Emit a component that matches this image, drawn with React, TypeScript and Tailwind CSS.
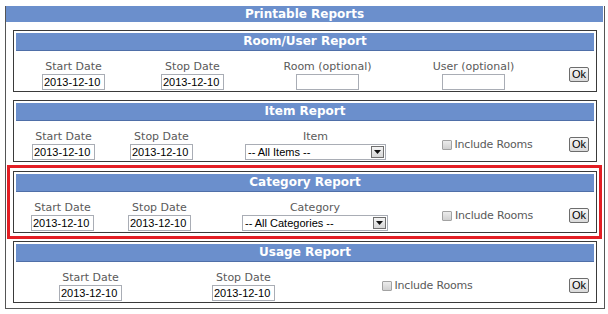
import React from 'react';

type Col = { w: number; label?: string; kind: 'date' | 'text' | 'select' | 'check' | 'ok'; value?: string; selW?: number };

const DateBox = ({ value }: { value: string }) => (
    <input
        readOnly
        defaultValue={value}
        className="w-[63px] h-[16px] px-[1px] border border-[#a9adb5] bg-white text-[11px] leading-[14px] text-black font-['Liberation_Sans',Arial,sans-serif] outline-none"
    />
);

const SelectBox = ({ value, w }: { value: string; w: number }) => (
    <div
        className="h-[16px] flex items-center justify-between border border-[#a9adb5] bg-white pl-[2px] pr-[1px]"
        style={{ width: w }}
    >
        <span className="text-[11px] leading-[14px] text-black font-['Liberation_Sans',Arial,sans-serif]">{value}</span>
        <span className="w-[13px] h-[12px] flex items-center justify-center border border-[#6f6f6f] bg-gradient-to-b from-[#f4f4f4] to-[#d6d6d6]">
            <svg width="7" height="4" viewBox="0 0 7 4"><path d="M0 0h7L3.5 4z" fill="#111" /></svg>
        </span>
    </div>
);

const Check = () => (
    <div className="flex items-center gap-[3px] text-[11px] tracking-[-0.2px] text-[#5a5a5a]">
        <span className="w-[10px] h-[10px] border border-[#a2a2a2] bg-gradient-to-b from-[#ececec] to-[#d0d0d0] rounded-[1px]" />
        <span>Include Rooms</span>
    </div>
);

const OkButton = () => (
    <button className="w-[20px] h-[15px] flex items-center justify-center border border-[#6d6d6d] rounded-[2px] bg-gradient-to-b from-[#f6f6f6] to-[#dadada] text-[11px] leading-none text-black font-['Liberation_Sans',Arial,sans-serif]">
        Ok
    </button>
);

function ReportBox({ title, cols }: { title: string; cols: Col[] }) {
    return (
        <div className="w-[584px] border border-[#3a3a3a] p-[2px] pb-0">
            <div className="h-[18px] bg-[#6b8fcc] border-b border-[#4f6fa8] text-white font-bold text-[12px] leading-[17px] text-center">
                {title}
            </div>
            <div className="flex items-center h-[40px] pt-[8px]">
                {cols.map((c, i) => (
                    <div
                        key={i}
                        className={`flex flex-col items-center ${c.kind === 'ok' ? 'flex-1 items-end pr-[5px] self-center -mt-[2px]' : ''}`}
                        style={c.kind === 'ok' ? undefined : { width: c.w }}
                    >
                        {c.label !== undefined && (
                            <span className="text-[11px] leading-[14px] text-[#5a5a5a] whitespace-nowrap">{c.label}</span>
                        )}
                        {c.kind === 'date' && <DateBox value={c.value || ''} />}
                        {c.kind === 'text' && <DateBox value="" />}
                        {c.kind === 'select' && <SelectBox value={c.value || ''} w={c.selW || 141} />}
                        {c.kind === 'check' && <Check />}
                        {c.kind === 'ok' && <OkButton />}
                    </div>
                ))}
            </div>
        </div>
    );
}

const d = '2013-12-10';

export default function App() {
    return (
        <div className="w-[608px] h-[314px] bg-white pt-[6px] font-['DejaVu_Sans',Verdana,sans-serif]">
            <div className="ml-[5px] w-[600px] h-[303px] border-x border-b border-[#555]">
                <div className="h-[16px] mr-[1px] bg-[#6b8fcc] text-white font-bold text-[12px] leading-[16px] text-center">
                    Printable Reports
                </div>
                <div className="px-[7px] pt-[8px] flex flex-col">
                    <ReportBox
                        title="Room/User Report"
                        cols={[
                            { w: 115, label: 'Start Date', kind: 'date', value: d },
                            { w: 123, label: 'Stop Date', kind: 'date', value: d },
                            { w: 147, label: 'Room (optional)', kind: 'text' },
                            { w: 145, label: 'User (optional)', kind: 'text' },
                            { w: 0, kind: 'ok' },
                        ]}
                    />
                    <div className="mt-[8px]">
                        <ReportBox
                            title="Item Report"
                            cols={[
                                { w: 95, label: 'Start Date', kind: 'date', value: d },
                                { w: 101, label: 'Stop Date', kind: 'date', value: d },
                                { w: 207, label: 'Item', kind: 'select', value: '-- All Items --', selW: 141 },
                                { w: 136, kind: 'check' },
                                { w: 0, kind: 'ok' },
                            ]}
                        />
                    </div>
                    <div className="mt-[3px] -ml-[6px] -mr-[5px] border-[3px] border-[#e31e24] pl-[3px] pr-[2px] py-[3px]">
                        <ReportBox
                            title="Category Report"
                            cols={[
                                { w: 93, label: 'Start Date', kind: 'date', value: d },
                                { w: 101, label: 'Stop Date', kind: 'date', value: d },
                                { w: 210, label: 'Category', kind: 'select', value: '-- All Categories --', selW: 146 },
                                { w: 135, kind: 'check' },
                                { w: 0, kind: 'ok' },
                            ]}
                        />
                    </div>
                    <div className="mt-[2px]">
                        <ReportBox
                            title="Usage Report"
                            cols={[
                                { w: 149, label: 'Start Date', kind: 'date', value: d },
                                { w: 157, label: 'Stop Date', kind: 'date', value: d },
                                { w: 210, kind: 'check' },
                                { w: 0, kind: 'ok' },
                            ]}
                        />
                    </div>
                </div>
            </div>
        </div>
    );
}
